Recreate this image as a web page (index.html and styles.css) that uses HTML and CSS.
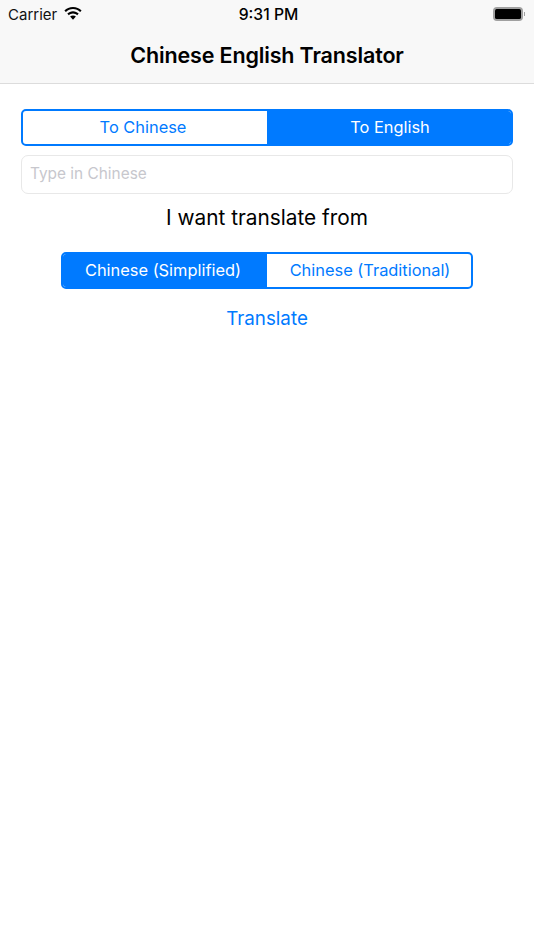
FILE: index.html
```html
<!DOCTYPE html>
<html lang="en">
<head>
    <meta charset="UTF-8">
    <meta name="viewport" content="width=device-width, initial-scale=1.0">
    <title>Chinese English Translator</title>
    <link rel="stylesheet" href="styles.css">
</head>
<body>

<header class="top-bar">
    <div class="status-bar">
        <div class="status-left">
            <span>Carrier</span>
            <svg class="wifi" width="18" height="13" viewBox="0 0 18 13">
                <path d="M9 0C5.6 0 2.6 1.300.4 3.500l1.500 1.600C3.700 3.200 6.200 2.100 9 2.100s5.300 1.100 7.100 3l1.500-1.600C15.400 1.300 12.400 0 9 0z"/>
                <path d="M9 4.200c-2.200 0-4.300.9-5.700 2.400l1.500 1.600C5.900 7.100 7.400 6.400 9 6.400s3.100.7 4.200 1.800l1.500-1.600C13.300 5.100 11.200 4.200 9 4.200z"/>
                <path d="M9 8.400c-1.100 0-2.100.5-2.900 1.200L9 12.800l2.900-3.200C11.100 8.900 10.100 8.400 9 8.400z"/>
            </svg>
        </div>
        <div class="status-time">9:31 PM</div>
        <div class="status-right">
            <div class="battery"><div class="battery-level"></div></div>
            <div class="battery-tip"></div>
        </div>
    </div>
    <div class="nav-title">Chinese English Translator</div>
</header>

<main class="content">
    <div class="segments">
        <div class="segment">To Chinese</div>
        <div class="segment active">To English</div>
    </div>

    <input class="text-input" type="text" placeholder="Type in Chinese">

    <div class="label">I want translate from</div>

    <div class="segments narrow">
        <div class="segment active">Chinese (Simplified)</div>
        <div class="segment">Chinese (Traditional)</div>
    </div>

    <div class="translate">Translate</div>
</main>

</body>
</html>
```

FILE: styles.css
```css
body {
    background-color: white;
    font-family: Inter, "Liberation Sans", sans-serif;
    color: black;
    margin: 0;
    padding: 0;
}

.top-bar {
    background-color: #f8f8f8;
    border-bottom: 1px solid #dcdcdc;
    height: 83px;
}

.status-bar {
    height: 29px;
    padding: 0 8px;
    display: flex;
    align-items: center;
    justify-content: space-between;
    font-size: 15px;
    position: relative;
}

.status-left {
    display: flex;
    align-items: center;
    gap: 7px;
    color: #111;
}

.wifi {
    margin-top: -2px;
}

.status-time {
    font-weight: 500;
    font-size: 15.7px;
    position: absolute;
    left: 0;
    right: 0;
    text-align: center;
    padding-left: 3px;
}

.status-right {
    display: flex;
    align-items: center;
    margin-top: -2px;
}

.battery {
    width: 30px;
    height: 14px;
    box-sizing: border-box;
    border: 2px solid #a0a0a0;
    border-radius: 4px;
}

.battery-level {
    height: 100%;
    background-color: black;
    border-radius: 1.5px;
}

.battery-tip {
    width: 1px;
    height: 4px;
    margin-left: 1px;
    margin-right: 1px;
    background-color: #a0a0a0;
}

.nav-title {
    text-align: center;
    font-size: 21.5px;
    font-weight: 600;
    line-height: 26px;
    margin-top: 13px;
    letter-spacing: -0.15px;
}

.content {
    display: flex;
    flex-direction: column;
    align-items: center;
    padding: 25px 21px 0;
}

.segments {
    display: flex;
    width: 100%;
    height: 37px;
    box-sizing: border-box;
    border: 2px solid #007aff;
    border-radius: 5px;
    overflow: hidden;
}

.segments.narrow {
    width: 412px;
    margin-top: 22px;
}

.segment {
    flex: none;
    width: 50%;
    box-sizing: border-box;
    display: flex;
    align-items: center;
    justify-content: center;
    padding-bottom: 2px;
    font-size: 16.4px;
    color: #007aff;
}

.segment:first-child {
    padding-right: 4px;
}

.segment:last-child {
    padding-left: 2px;
}

.segment.active {
    background-color: #007aff;
    color: white;
}

.text-input {
    width: 100%;
    height: 39px;
    box-sizing: border-box;
    margin-top: 9px;
    padding: 0 8px 3px;
    border: 1px solid #e8e8e8;
    border-radius: 7px;
    font-family: inherit;
    font-size: 15.4px;
}

.text-input::placeholder {
    color: #c7c7cd;
}

.label {
    font-size: 20.8px;
    line-height: 24px;
    margin-top: 12px;
}

.translate {
    font-size: 18.8px;
    line-height: 24px;
    color: #007aff;
    margin-top: 18px;
}
```
